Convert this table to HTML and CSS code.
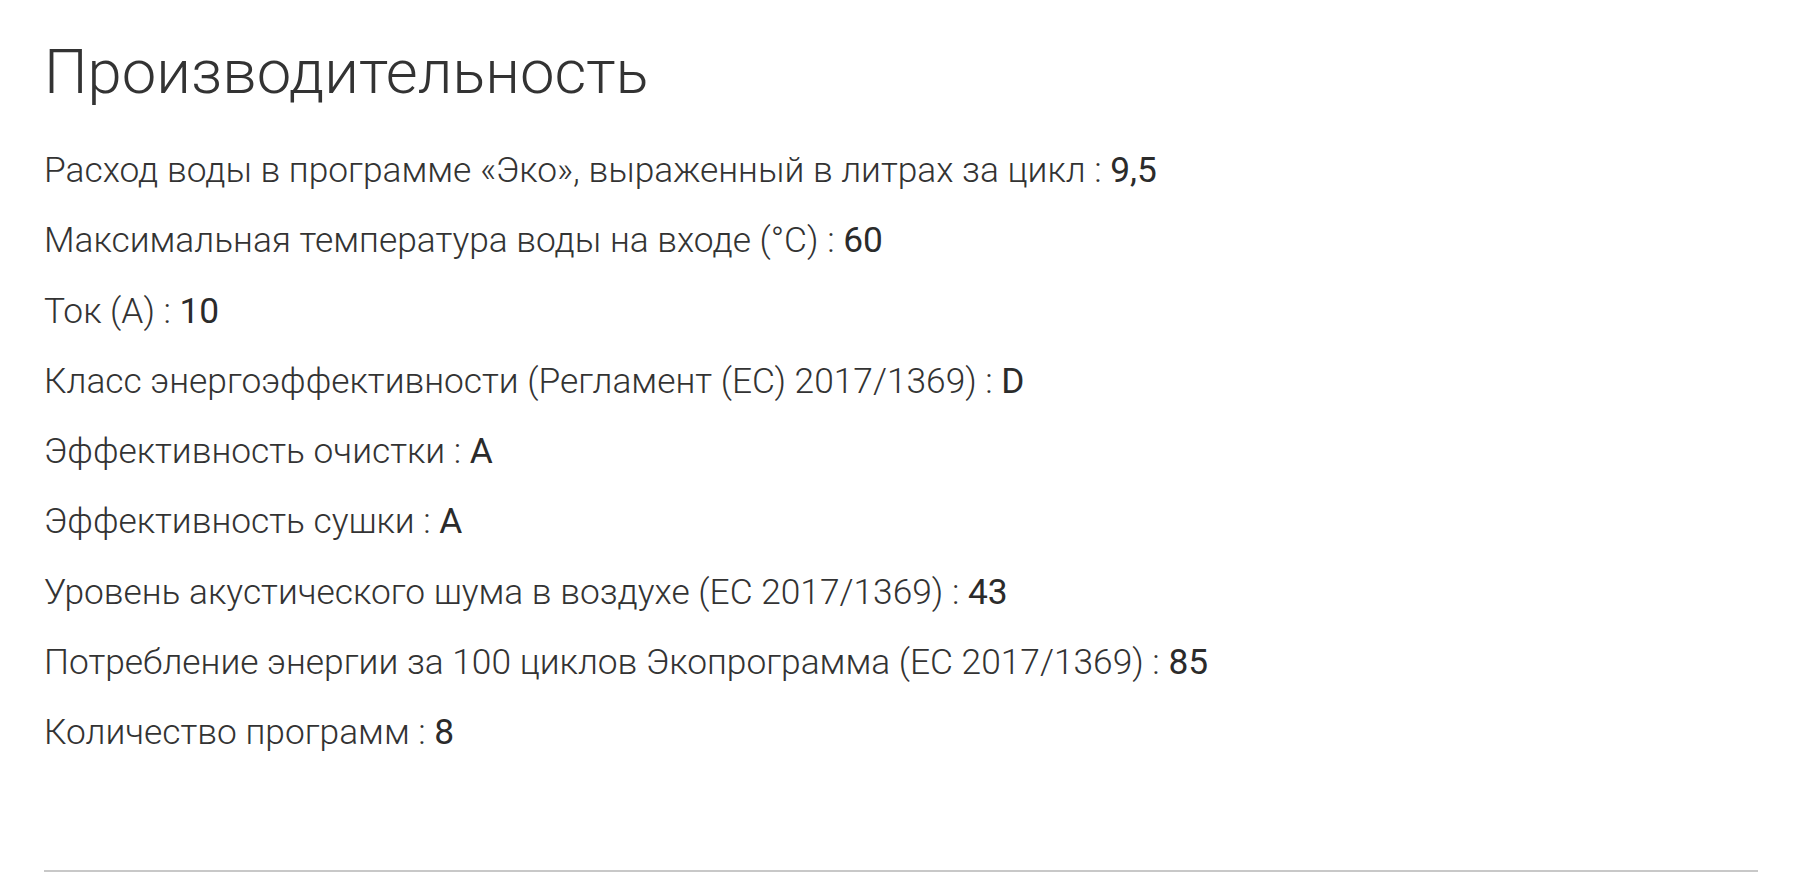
FILE: index.html
```html
<!DOCTYPE html>
<html lang="ru">
<head>
<meta charset="utf-8">
<link rel="stylesheet" href="styles.css">
</head>
<body>
<section class="specs">
  <h2 class="specs-title">Производительность</h2>
  <ul class="specs-list">
    <li class="spec"><span class="spec-label">Расход воды в программе «Эко», выраженный в литрах за цикл : </span><span class="spec-value">9,5</span></li>
    <li class="spec"><span class="spec-label">Максимальная температура воды на входе (°C) : </span><span class="spec-value">60</span></li>
    <li class="spec"><span class="spec-label">Ток (A) : </span><span class="spec-value">10</span></li>
    <li class="spec"><span class="spec-label">Класс энергоэффективности (Регламент (ЕС) 2017/1369) : </span><span class="spec-value">D</span></li>
    <li class="spec"><span class="spec-label">Эффективность очистки : </span><span class="spec-value">A</span></li>
    <li class="spec"><span class="spec-label">Эффективность сушки : </span><span class="spec-value">A</span></li>
    <li class="spec"><span class="spec-label">Уровень акустического шума в воздухе (ЕС 2017/1369) : </span><span class="spec-value">43</span></li>
    <li class="spec"><span class="spec-label">Потребление энергии за 100 циклов Экопрограмма (ЕС 2017/1369) : </span><span class="spec-value">85</span></li>
    <li class="spec"><span class="spec-label">Количество программ : </span><span class="spec-value">8</span></li>
  </ul>
  <hr class="specs-divider">
</section>
</body>
</html>
```
FILE: styles.css
```css
html, body {
  margin: 0;
  padding: 0;
  background: #ffffff;
}
body {
  font-family: Roboto, "Noto Sans", sans-serif;
  color: #333333;
}
.specs {
  padding: 0 44px;
  display: flex;
  flex-direction: column;
}
.specs-title {
  margin: 35px 0 0 0;
  font-size: 61.6px;
  line-height: 74px;
  font-weight: 300;
  color: #333333;
}
.specs-list {
  list-style: none;
  margin: 26px 0 0 0;
  padding: 0;
}
.spec {
  font-size: 35.3px;
  line-height: 70.25px;
  font-weight: 300;
  white-space: nowrap;
}
.spec-value {
  font-weight: 400;
  color: #2b2b2b;
}
.specs-divider {
  margin: 103px 0 0 0;
  border: 0;
  height: 2px;
  background: #c8c8c8;
}
```
